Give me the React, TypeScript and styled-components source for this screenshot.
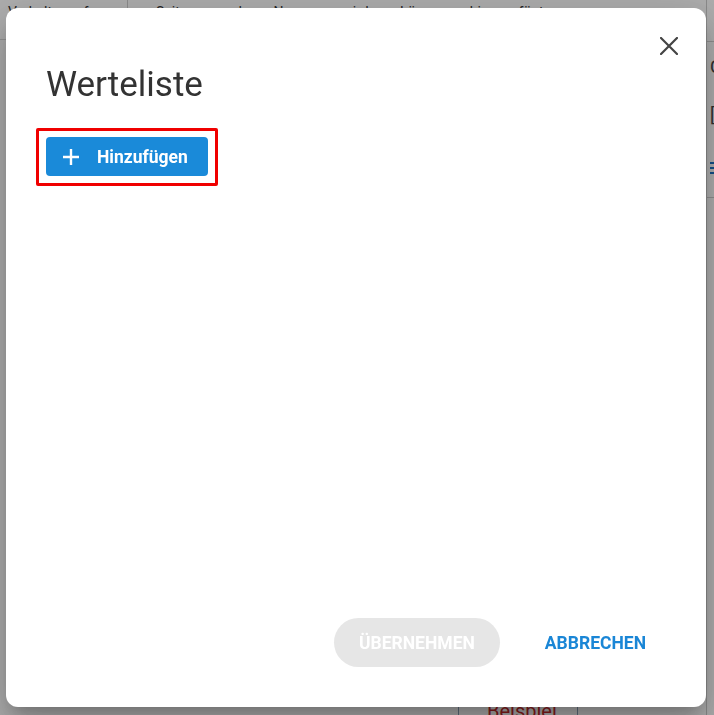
import React from 'react';
import styled, { createGlobalStyle } from 'styled-components';

const Global = createGlobalStyle`
  html, body {
    margin: 0;
    padding: 0;
    width: 714px;
    height: 715px;
    overflow: hidden;
    background: #ffffff;
    font-family: Roboto, "Noto Sans", Arial, sans-serif;
  }
  * { box-sizing: border-box; }
`;

/* ---------- underlying page (mostly hidden) ---------- */
const Page = styled.div`
  width: 714px;
  height: 715px;
  display: grid;
  grid-template-columns: 706px 1fr;
  overflow: hidden;
`;

const Main = styled.div`
  display: flex;
  flex-direction: column;
  justify-content: space-between;
`;

const HeadRow = styled.div`
  display: grid;
  grid-template-columns: 127px 1fr;
  height: 40px;
  border-bottom: 1px solid #d8d8d8;
`;

const HeadCell = styled.div<{ $divider?: boolean }>`
  padding: 4px 8px 0 ${(p) => (p.$divider ? '28px' : '8px')};
  border-left: ${(p) => (p.$divider ? '1px solid #cfcfcf' : 'none')};
  font-size: 14px;
  color: #333;
  white-space: nowrap;
  overflow: hidden;
  word-spacing: 28px;
`;

const BottomRow = styled.div`
  display: grid;
  grid-template-columns: 458px 120px 64px 1fr;
  height: 28px;
`;

const BottomCell = styled.div<{ $border?: boolean }>`
  border-left: ${(p) => (p.$border ? '1px solid #8aa0b8' : 'none')};
  border-right: ${(p) => (p.$border ? '1px solid #8aa0b8' : 'none')};
  padding: 12px 0 0 28px;
  font-size: 20px;
  color: #c62828;
`;

const Side = styled.div`
  border-left: 1px solid #cccccc;
  display: flex;
  flex-direction: column;
`;

const SideRow = styled.div<{ $h: number; $pt?: number; $line?: boolean }>`
  height: ${(p) => p.$h}px;
  padding: ${(p) => p.$pt ?? 0}px 0 0 3px;
  border-bottom: ${(p) => (p.$line ? '1px solid #d0d0d0' : 'none')};
  font-size: 18px;
  line-height: 21px;
  color: #444;
  overflow: hidden;
`;

const SideBlue = styled.div`
  width: 6px;
  display: flex;
  flex-direction: column;
  gap: 3px;
  span { height: 2px; background: #1a73c8; }
`;

const Backdrop = styled.div`
  position: fixed;
  inset: 0;
  background: rgba(0, 0, 0, 0.32);
`;

/* ---------- dialog ---------- */
const Dialog = styled.div`
  position: fixed;
  left: 6px;
  top: 8px;
  width: 700px;
  height: 699px;
  background: #fff;
  border-radius: 12px;
  box-shadow: 0 11px 15px -7px rgba(0, 0, 0, 0.2),
    0 24px 38px 3px rgba(0, 0, 0, 0.14), 0 9px 46px 8px rgba(0, 0, 0, 0.12);
  display: flex;
  flex-direction: column;
`;

const CloseButton = styled.button`
  position: absolute;
  top: 18px;
  right: 17px;
  width: 40px;
  height: 40px;
  border: none;
  background: transparent;
  padding: 0;
  display: flex;
  align-items: center;
  justify-content: center;
  cursor: pointer;
`;

const Title = styled.h2`
  margin: 0;
  padding: 56px 40px 0 40px;
  font-size: 35px;
  line-height: 42px;
  font-weight: 400;
  color: #333333;
`;

const Body = styled.div`
  flex: 1;
  padding: 22px 0 0 30px;
`;

const Highlight = styled.div`
  display: inline-flex;
  border: 3px solid #f00000;
  border-radius: 2px;
  padding: 6px 7px 7px 7px;
`;

const AddButton = styled.button`
  height: 39px;
  width: 162px;
  border: none;
  border-radius: 4px;
  background: #1a8ad9;
  color: #fff;
  display: flex;
  align-items: center;
  gap: 17px;
  padding: 0 0 0 16px;
  font-family: Roboto, "Noto Sans", Arial, sans-serif;
  font-size: 17.5px;
  font-weight: 700;
  cursor: pointer;
`;

const Footer = styled.div`
  display: flex;
  justify-content: flex-end;
  align-items: center;
  gap: 20px;
  padding: 0 35px 40px 0;
`;

const FooterButton = styled.button<{ $variant: 'disabled' | 'text' }>`
  height: 49px;
  border: none;
  border-radius: 25px;
  padding: 0 25px;
  font-family: Roboto, "Noto Sans", Arial, sans-serif;
  font-size: 17.5px;
  font-weight: 700;
  text-transform: uppercase;
  background: ${(p) => (p.$variant === 'disabled' ? '#e6e6e6' : 'transparent')};
  color: ${(p) => (p.$variant === 'disabled' ? '#ffffff' : '#1a86d6')};
  cursor: ${(p) => (p.$variant === 'disabled' ? 'default' : 'pointer')};
`;

const CloseIcon = () => (
  <svg width="18" height="18" viewBox="0 0 18 18">
    <path d="M1 1 L17 17 M17 1 L1 17" stroke="#444" strokeWidth="2.2" strokeLinecap="square" />
  </svg>
);

const PlusIcon = () => (
  <svg width="18" height="18" viewBox="0 0 18 18">
    <path d="M9 1 V17 M1 9 H17" stroke="#fff" strokeWidth="2.4" />
  </svg>
);

export default function App() {
  return (
    <>
      <Global />
      <Page>
        <Main>
          <HeadRow>
            <HeadCell>Verhalt f</HeadCell>
            <HeadCell $divider>Seite und Name wird Länge hinzugefügt</HeadCell>
          </HeadRow>
          <BottomRow>
            <div />
            <BottomCell $border>Beispiel</BottomCell>
            <div />
            <div />
          </BottomRow>
        </Main>
        <Side>
          <SideRow $h={42} $line />
          <SideRow $h={50} $pt={14}>C</SideRow>
          <SideRow $h={48} $pt={12}>[</SideRow>
          <SideRow $h={58} $pt={22} $line>
            <SideBlue>
              <span />
              <span />
              <span />
            </SideBlue>
          </SideRow>
        </Side>
      </Page>
      <Backdrop />
      <Dialog role="dialog">
        <CloseButton aria-label="Schließen">
          <CloseIcon />
        </CloseButton>
        <Title>Werteliste</Title>
        <Body>
          <Highlight>
            <AddButton>
              <PlusIcon />
              Hinzufügen
            </AddButton>
          </Highlight>
        </Body>
        <Footer>
          <FooterButton $variant="disabled" disabled>Übernehmen</FooterButton>
          <FooterButton $variant="text">Abbrechen</FooterButton>
        </Footer>
      </Dialog>
    </>
  );
}
